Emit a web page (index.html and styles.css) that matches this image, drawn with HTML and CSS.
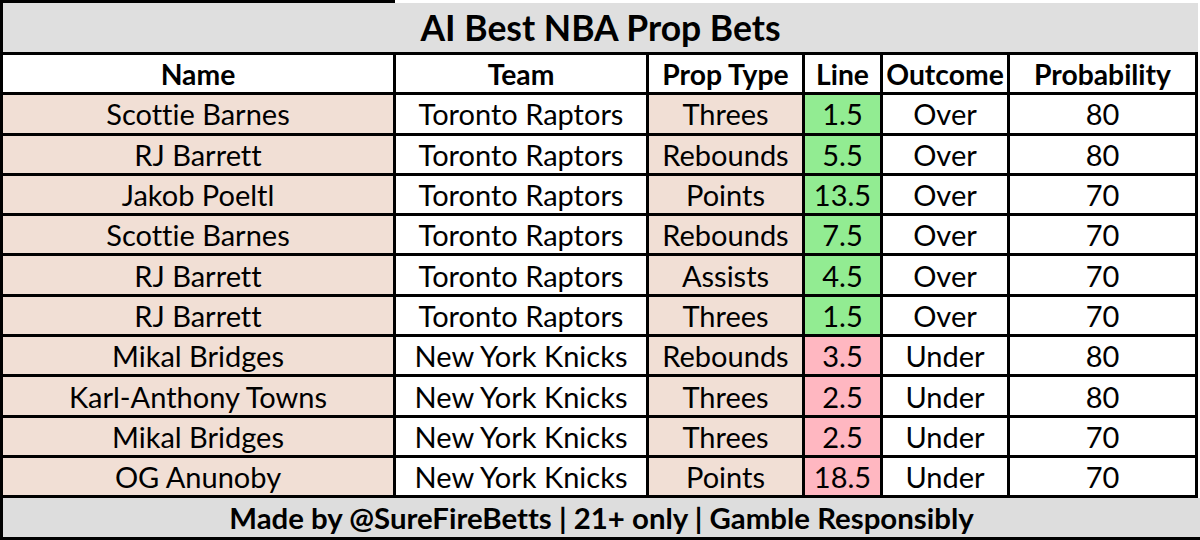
FILE: index.html
```html
<!DOCTYPE html>
<html>
<head>
<meta charset="utf-8">
<link rel="stylesheet" href="styles.css">
</head>
<body>
<div class="page">
  <div class="topline"><div class="topline-bar"></div></div>
  <div class="title">AI Best NBA Prop Bets</div>
  <div class="grid">
    <div class="cell hd">Name</div>
    <div class="cell hd">Team</div>
    <div class="cell hd">Prop Type</div>
    <div class="cell hd">Line</div>
    <div class="cell hd">Outcome</div>
    <div class="cell hd">Probability</div>

    <div class="cell peach">Scottie Barnes</div>
    <div class="cell">Toronto Raptors</div>
    <div class="cell peach">Threes</div>
    <div class="cell green">1.5</div>
    <div class="cell">Over</div>
    <div class="cell">80</div>

    <div class="cell peach">RJ Barrett</div>
    <div class="cell">Toronto Raptors</div>
    <div class="cell peach">Rebounds</div>
    <div class="cell green">5.5</div>
    <div class="cell">Over</div>
    <div class="cell">80</div>

    <div class="cell peach">Jakob Poeltl</div>
    <div class="cell">Toronto Raptors</div>
    <div class="cell peach">Points</div>
    <div class="cell green">13.5</div>
    <div class="cell">Over</div>
    <div class="cell">70</div>

    <div class="cell peach">Scottie Barnes</div>
    <div class="cell">Toronto Raptors</div>
    <div class="cell peach">Rebounds</div>
    <div class="cell green">7.5</div>
    <div class="cell">Over</div>
    <div class="cell">70</div>

    <div class="cell peach">RJ Barrett</div>
    <div class="cell">Toronto Raptors</div>
    <div class="cell peach">Assists</div>
    <div class="cell green">4.5</div>
    <div class="cell">Over</div>
    <div class="cell">70</div>

    <div class="cell peach">RJ Barrett</div>
    <div class="cell">Toronto Raptors</div>
    <div class="cell peach">Threes</div>
    <div class="cell green">1.5</div>
    <div class="cell">Over</div>
    <div class="cell">70</div>

    <div class="cell peach">Mikal Bridges</div>
    <div class="cell">New York Knicks</div>
    <div class="cell peach">Rebounds</div>
    <div class="cell pink">3.5</div>
    <div class="cell">Under</div>
    <div class="cell">80</div>

    <div class="cell peach">Karl-Anthony Towns</div>
    <div class="cell">New York Knicks</div>
    <div class="cell peach">Threes</div>
    <div class="cell pink">2.5</div>
    <div class="cell">Under</div>
    <div class="cell">80</div>

    <div class="cell peach">Mikal Bridges</div>
    <div class="cell">New York Knicks</div>
    <div class="cell peach">Threes</div>
    <div class="cell pink">2.5</div>
    <div class="cell">Under</div>
    <div class="cell">70</div>

    <div class="cell peach">OG Anunoby</div>
    <div class="cell">New York Knicks</div>
    <div class="cell peach">Points</div>
    <div class="cell pink">18.5</div>
    <div class="cell">Under</div>
    <div class="cell">70</div>
  </div>
  <div class="footer">Made by @SureFireBetts | 21+ only | Gamble Responsibly</div>
</div>
</body>
</html>
```

FILE: styles.css
```css
html, body {
  margin: 0;
  padding: 0;
  background: #ffffff;
}

.page {
  width: 1200px;
  height: 540px;
  overflow: hidden;
  font-family: Lato, "Open Sans", "DejaVu Sans", sans-serif;
  font-variant-ligatures: none;
  color: #000;
}

.topline {
  height: 3px;
  display: flex;
}

.topline-bar {
  width: 395px;
  background: #000;
}

.title {
  width: 1198px;
  box-sizing: border-box;
  height: 49px;
  border-left: 3px solid #000;
  background: #dfdfdf;
  display: flex;
  align-items: center;
  justify-content: center;
  font-weight: 700;
  font-size: 35.5px;
}

.grid {
  width: 1198px;
  box-sizing: border-box;
  display: grid;
  grid-template-columns: 390px 250px 153px 75px 124px 185px;
  grid-auto-rows: 37.3px;
  gap: 3px;
  padding: 3px;
  background: #000;
}

.cell {
  background: #fff;
  display: flex;
  align-items: center;
  justify-content: center;
  font-size: 29px;
  white-space: nowrap;
}

.hd {
  font-weight: 700;
  font-size: 28.3px;
}

.peach {
  background: #f1dfd5;
}

.green {
  background: #92ec92;
}

.pink {
  background: #ffb7c1;
}

.footer {
  width: 1200px;
  box-sizing: border-box;
  height: 41.7px;
  border-left: 3px solid #000;
  border-bottom: 3px solid #000;
  background: #dddddd;
  display: flex;
  align-items: center;
  justify-content: center;
  font-weight: 700;
  font-size: 29.4px;
}
```
